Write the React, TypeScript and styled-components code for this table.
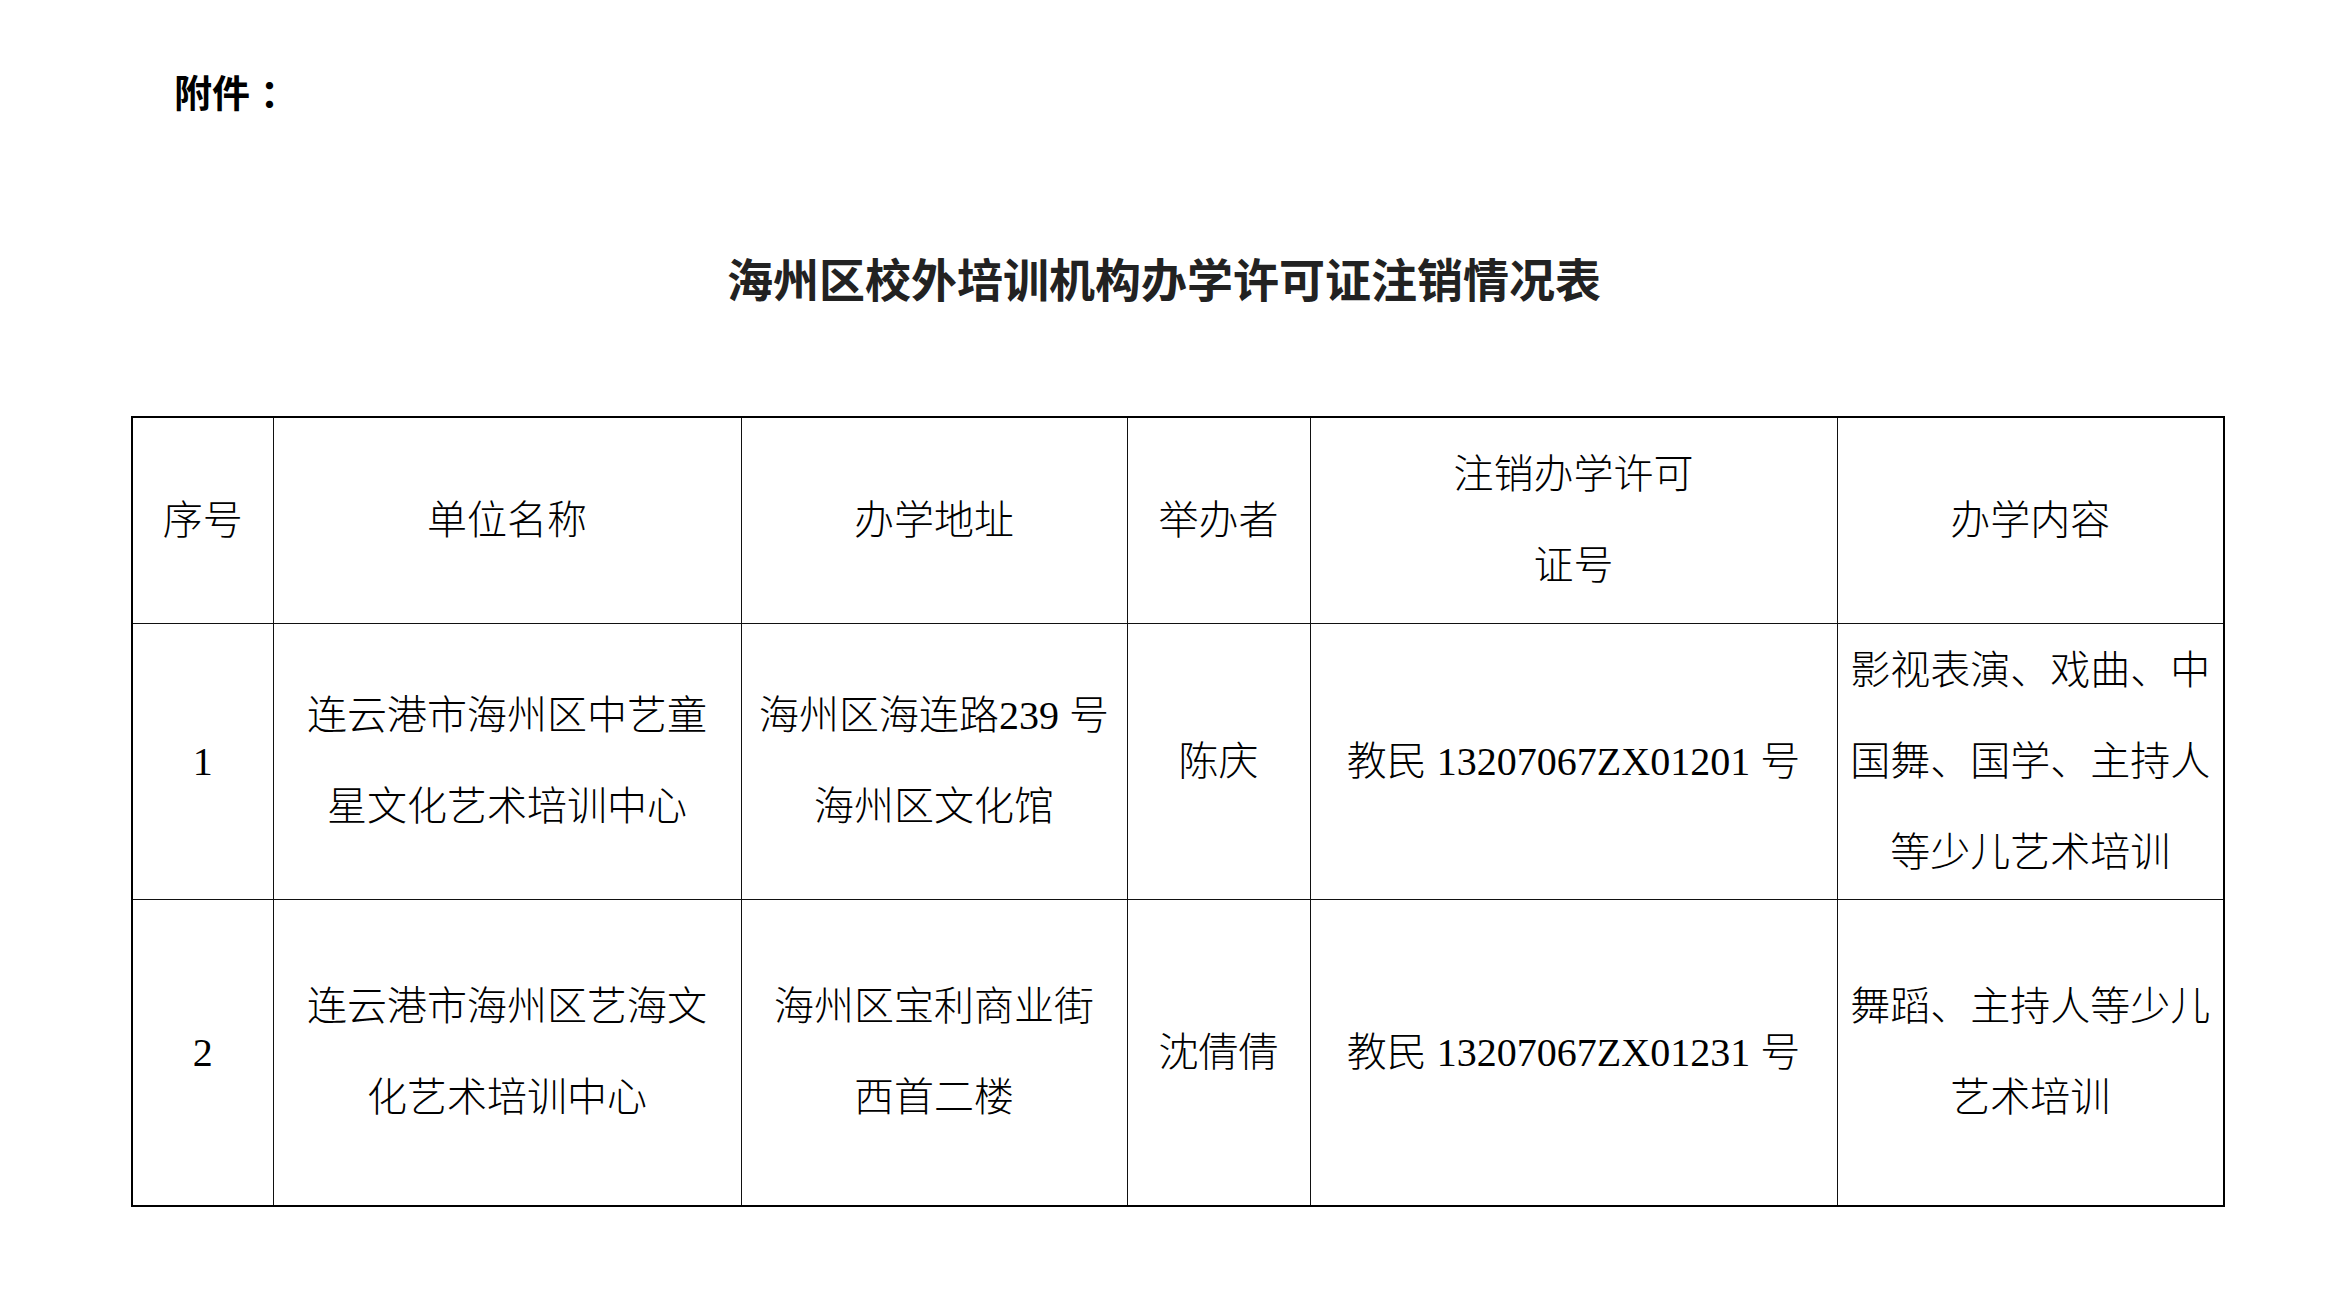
import React from "react";
import styled, { createGlobalStyle } from "styled-components";

const GlobalStyle = createGlobalStyle`
  html, body {
    margin: 0;
    padding: 0;
    background: #ffffff;
  }
  body {
    font-family: "Liberation Serif", "Noto Sans CJK SC", serif;
    color: #000;
  }
`;

const Page = styled.div`
  width: 2092px;
  padding: 71px 0 0 131px;
`;

const Attachment = styled.div`
  padding-left: 43px;
  font-family: "Noto Sans CJK SC", sans-serif;
  font-size: 38px;
  line-height: 40px;
  font-weight: 700;
`;

const Colon = styled.span`
  margin-left: 10px;
`;

const Title = styled.h1`
  margin: 142px 0 0;
  padding-right: 26px;
  text-align: center;
  font-family: "Noto Sans CJK SC", sans-serif;
  font-size: 46px;
  line-height: 48px;
  font-weight: 700;
  color: #222;
`;

const Table = styled.table`
  margin-top: 115px;
  width: 2092px;
  border-collapse: collapse;
  table-layout: fixed;
  border: 2px solid #000;
`;

const Row = styled.tr<{ $height: number }>`
  height: ${(p) => p.$height}px;
`;

const Cell = styled.td`
  border: 1px solid #111;
  padding: 0 8px;
  text-align: center;
  vertical-align: middle;
  font-family: "Liberation Serif", "Noto Sans CJK SC", serif;
  font-weight: 300;
  font-size: 40px;
  line-height: 91px;
  white-space: nowrap;
`;

const Line = styled.div`
  display: block;
`;

const widths = [141, 468, 386, 183, 527, 387];

const header = [
  ["序号"],
  ["单位名称"],
  ["办学地址"],
  ["举办者"],
  ["注销办学许可", "证号"],
  ["办学内容"],
];

const rows = [
  {
    height: 276,
    cells: [
      ["1"],
      ["连云港市海州区中艺童", "星文化艺术培训中心"],
      ["海州区海连路239 号", "海州区文化馆"],
      ["陈庆"],
      ["教民 13207067ZX01201 号"],
      ["影视表演、戏曲、中", "国舞、国学、主持人", "等少儿艺术培训"],
    ],
  },
  {
    height: 307,
    cells: [
      ["2"],
      ["连云港市海州区艺海文", "化艺术培训中心"],
      ["海州区宝利商业街", "西首二楼"],
      ["沈倩倩"],
      ["教民 13207067ZX01231 号"],
      ["舞蹈、主持人等少儿", "艺术培训"],
    ],
  },
];

const renderLines = (lines: string[]) =>
  lines.map((l, i) => <Line key={i}>{l}</Line>);

const App = () => {
  return (
    <>
      <GlobalStyle />
      <Page>
        <Attachment>
          附件<Colon>：</Colon>
        </Attachment>
        <Title>海州区校外培训机构办学许可证注销情况表</Title>
        <Table>
          <colgroup>
            {widths.map((w, i) => (
              <col key={i} style={{ width: w }} />
            ))}
          </colgroup>
          <tbody>
            <Row $height={206}>
              {header.map((h, i) => (
                <Cell key={i}>{renderLines(h)}</Cell>
              ))}
            </Row>
            {rows.map((r, i) => (
              <Row key={i} $height={r.height}>
                {r.cells.map((c, j) => (
                  <Cell key={j}>{renderLines(c)}</Cell>
                ))}
              </Row>
            ))}
          </tbody>
        </Table>
      </Page>
    </>
  );
};

export default App;
